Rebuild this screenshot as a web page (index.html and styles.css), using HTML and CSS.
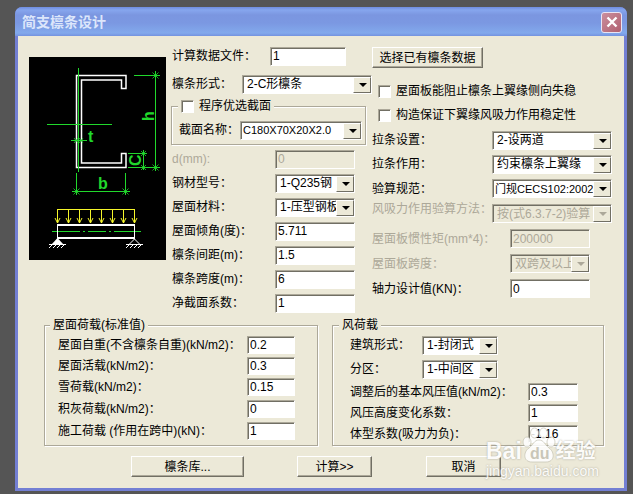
FILE: index.html
```html
<!DOCTYPE html>
<html lang="zh-CN">
<head>
<meta charset="utf-8">
<title>简支檩条设计</title>
<link rel="stylesheet" href="styles.css">
</head>
<body>
<form class="window">
  <header class="titlebar">
    <h1>简支檩条设计</h1>
    <button type="button" class="close" aria-label="关闭">
      <svg viewBox="0 0 12 12" width="12" height="12"><path d="M1.500 1.500L10.500 10.500M10.500 1.500L1.500 10.500" stroke="#fff" stroke-width="2.400"/></svg>
    </button>
  </header>
  <main>
    <div class="top">
      <svg class="diagram" viewBox="0 0 137 203">
        <rect width="137" height="203" fill="#000"/>
        <path d="M47.500 18.500H97V31.500H92.500V23H52.500V106H92.500V96.500H97V110.500H47.500Z" fill="none" stroke="#fff" stroke-width="1.500"/>
        <g stroke="#21d82c" fill="none">
          <path d="M49.500 11V115M18 67.500H83M105 18.500H131M126.500 14V114M99 110.500H131M99 96.500H118M114.500 93V113M42 83.500H58M47.500 116V138M96.500 116V138M43 134.500H101"/>
          <path d="M123.500 15.500L129.500 21.500M129.500 15.500L123.500 21.500M123.500 107.500L129.500 113.500M129.500 107.500L123.500 113.500M112 94L117 99M117 94L112 99M112 108L117 113M117 108L112 113M44.500 131.500L50.500 137.500M50.500 131.500L44.500 137.500M93.500 131.500L99.500 137.500M99.500 131.500L93.500 137.500M45 81L49 86M49 81L45 86M50 81L54 86M54 81L50 86" stroke-width=".8"/>
          <path d="M23 174.500H51M54 174.500H56M59 174.500H77M80 174.500H82M85 174.500H112"/>
        </g>
        <g class="dims">
          <text x="59" y="85">t</text>
          <text x="69" y="132">b</text>
          <text transform="translate(125 64) rotate(-90)">h</text>
          <text transform="translate(112 109) rotate(-90)">C</text>
        </g>
        <g stroke="#f5f52a" fill="none">
          <path d="M28 152.500H106M28.500 152V166M39.500 152V166M50.500 152V166M61.500 152V166M72.500 152V166M83.500 152V166M94.500 152V166M105.500 152V166"/>
          <path d="M26 161L28.500 166L31 161M37 161L39.500 166L42 161M48 161L50.500 166L53 161M59 161L61.500 166L64 161M70 161L72.500 166L75 161M81 161L83.500 166L86 161M92 161L94.500 166L97 161M103 161L105.500 166L108 161"/>
        </g>
        <path d="M28 168H106M28 181H106" stroke="#fff" stroke-width="2"/>
        <path d="M28.500 168V182M105.500 168V182M20 187.500H37M97 187.500H114M24 187L20 191M28 187L24 191M32 187L28 191M36 187L32 191M101 187L97 191M105 187L101 191M109 187L105 191M113 187L109 191M105.500 182L100.500 187M105.500 182L110.500 187" stroke="#fff"/>
        <path d="M28.500 181L22.500 187.500H34.500Z" fill="#fff"/>
      </svg>

      <section class="member">
        <div class="row"><label class="w-file" for="file">计算数据文件：</label><input class="in-file" id="file" value="1"></div>
        <div class="row shape"><label class="w-shape" for="shape">檩条形式：</label><span class="combo c-shape"><select id="shape"><option>2-C形檩条</option></select></span></div>
        <fieldset class="section">
          <legend><label class="check"><input type="checkbox">程序优选截面</label></legend>
          <div class="row"><label for="name">截面名称：</label><span class="combo c-name"><select class="compact" id="name"><option>C180X70X20X2.0</option></select></span></div>
        </fieldset>
        <div class="row"><label class="w-mem off" for="d">d(mm):</label><input id="d" value="0" disabled></div>
        <div class="row"><label class="w-mem" for="steel">钢材型号：</label><span class="combo"><select id="steel"><option>1-Q235钢</option></select></span></div>
        <div class="row"><label class="w-mem" for="roof">屋面材料：</label><span class="combo"><select id="roof"><option>1-压型钢板</option></select></span></div>
        <div class="row"><label class="w-mem" for="angle">屋面倾角(度)：</label><input id="angle" value="5.711"></div>
        <div class="row"><label class="w-mem" for="gap">檩条间距(m)：</label><input id="gap" value="1.5"></div>
        <div class="row"><label class="w-mem" for="span">檩条跨度(m)：</label><input id="span" value="6"></div>
        <div class="row"><label class="w-mem" for="net">净截面系数：</label><input id="net" value="1"></div>
      </section>

      <section class="options">
        <button type="button" class="push pick">选择已有檩条数据</button>
        <label class="check"><input type="checkbox">屋面板能阻止檩条上翼缘侧向失稳</label>
        <label class="check"><input type="checkbox">构造保证下翼缘风吸力作用稳定性</label>
        <div class="row"><label class="w-opt" for="brace">拉条设置：</label><span class="combo c-opt"><select id="brace"><option>2-设两道</option></select></span></div>
        <div class="row"><label class="w-opt" for="act">拉条作用：</label><span class="combo c-opt"><select id="act"><option>约束檩条上翼缘</option></select></span></div>
        <div class="row tall"><label class="w-opt" for="code">验算规范：</label><span class="combo c-opt"><select class="compact" id="code"><option>门规CECS102:2002</option></select></span></div>
        <div class="row tall raised"><label class="w-opt off" for="method">风吸力作用验算方法：</label><span class="combo c-opt"><select id="method" disabled><option>按(式6.3.7-2)验算</option></select></span></div>
        <div class="row tall"><label class="w-plate off" for="inertia">屋面板惯性矩(mm*4)：</label><input id="inertia" value="200000" disabled></div>
        <div class="row tall"><label class="w-plate off" for="pspan">屋面板跨度：</label><span class="combo"><select id="pspan" disabled><option>双跨及以上</option></select></span></div>
        <div class="row tall"><label class="w-plate" for="axial">轴力设计值(KN)：</label><input id="axial" value="0"></div>
      </section>
    </div>

    <div class="loads">
      <fieldset class="roof">
        <legend>屋面荷载(标准值)</legend>
        <div class="row low"><label for="l1">屋面自重(不含檩条自重)(kN/m2)：</label><input id="l1" value="0.2"></div>
        <div class="row low"><label for="l2">屋面活载(kN/m2)：</label><input id="l2" value="0.3"></div>
        <div class="row mid"><label for="l3">雪荷载(kN/m2)：</label><input id="l3" value="0.15"></div>
        <div class="row mid"><label for="l4">积灰荷载(kN/m2)：</label><input id="l4" value="0"></div>
        <div class="row mid"><label for="l5">施工荷载 (作用在跨中)(kN)：</label><input id="l5" value="1"></div>
      </fieldset>
      <fieldset class="wind">
        <legend>风荷载</legend>
        <div class="row"><label class="w-build" for="build">建筑形式：</label><span class="combo c-build"><select id="build"><option>1-封闭式</option></select></span></div>
        <div class="row"><label class="w-build" for="zone">分区：</label><span class="combo c-build"><select id="zone"><option>1-中间区</option></select></span></div>
        <div class="row low"><label class="w-wind" for="w1">调整后的基本风压值(kN/m2)：</label><input id="w1" value="0.3"></div>
        <div class="row low"><label class="w-wind" for="w2">风压高度变化系数：</label><input id="w2" value="1"></div>
        <div class="row low"><label class="w-wind" for="w3">体型系数(吸力为负)：</label><input id="w3" value="-1.16"></div>
      </fieldset>
    </div>

    <div class="actions">
      <button type="button" class="push library">檩条库...</button>
      <button type="button" class="push calc">计算&gt;&gt;</button>
      <button type="button" class="push cancel">取消</button>
    </div>
  </main>
</form>
<div class="watermark">
  <div class="brand">
    <span>Bai</span>
    <svg viewBox="0 0 34 36" width="34" height="36">
      <g fill="#fff" stroke="#c4c1b3" stroke-width=".8">
        <ellipse cx="5" cy="15" rx="4" ry="5"/><ellipse cx="12.500" cy="6" rx="4" ry="5"/><ellipse cx="21.500" cy="6" rx="4" ry="5"/><ellipse cx="29" cy="15" rx="4" ry="5"/>
        <path d="M17 13C12 13 11 18 7 21C1 25 1 35 10 35H24C33 35 33 25 27 21C23 18 22 13 17 13Z"/>
      </g>
      <text x="8" y="32">du</text>
    </svg>
    <span class="cn">经验</span>
  </div>
  <div class="site">jingyan.baidu.com</div>
</div>
</body>
</html>
```
FILE: styles.css
```css
* { box-sizing: border-box; }

body {
  margin: 0;
  padding: 7px 6px 5px 15px;
  background: #555;
  color: #000;
  font: 12px/16px "Liberation Sans", "Noto Sans CJK SC", sans-serif;
}

input, select, button { font: inherit; color: inherit; margin: 0; }

.window {
  padding: 0 3px 3px;
  border-radius: 7px 7px 0 0;
  background: #737fd3;
}

.titlebar {
  display: flex;
  align-items: center;
  justify-content: space-between;
  height: 29px;
  margin: 0 -3px;
  padding: 1px 5px 0 7px;
  border-radius: 7px 7px 0 0;
  background: linear-gradient(#6f8de0 0, #86a6ee 3px, #7b96e0 8px, #7b98e2 16px, #82a9ec 26px, #7492df 29px);
}

h1 {
  margin: 0;
  color: #dce6fb;
  font-size: 14px;
  line-height: 20px;
  font-weight: bold;
}

.close {
  display: grid;
  place-items: center;
  width: 21px;
  height: 21px;
  padding: 0;
  border: 1px solid #e8e4f4;
  border-radius: 3px;
  background: linear-gradient(135deg, #cb8f9e, #b06070);
}

main {
  padding: 8px 10px 11px 11px;
  background: #ece9d8;
}

.top { display: flex; }

.diagram {
  flex: none;
  width: 137px;
  height: 203px;
  margin: 13px 6px 0 0;
}

.dims {
  fill: #21d82c;
  font: bold 16px "Liberation Sans", sans-serif;
}

.member { flex: none; width: 200px; }
.options { flex: 1; }

.row { display: flex; align-items: center; height: 24px; }
.row label { flex: none; white-space: nowrap; }
.tall { height: 25px; }
.low { height: 21px; }
.mid { height: 22px; }
.shape { margin-top: 4px; }

.raised { align-items: flex-start; }
.raised .combo { align-self: center; }

.w-file { width: 98px; }
.w-shape { width: 70px; }
.w-mem { width: 103px; }
.w-opt { width: 120px; }
.w-plate { width: 138px; }
.w-build { width: 72px; }
.w-wind { width: 178px; }

.off { color: #aca899; }

.row > input, .combo {
  width: 80px;
  height: 19px;
  border: 1px solid;
  border-color: #aca899 #fff #fff #aca899;
  background: #fff;
}

.row > input {
  padding: 0 0 0 2px;
  box-shadow: inset 1px 1px #716f64;
  outline: 0;
}

.row > input:disabled { background: #ece9d8; color: #aca899; }

.combo {
  display: block;
  position: relative;
  box-shadow: inset 1px 1px #716f64;
}

.combo select {
  display: block;
  appearance: none;
  width: 100%;
  height: 17px;
  padding: 0 16px 0 4px;
  border: 0;
  background: transparent;
  outline: 0;
}

.combo select.compact { font-size: 11px; padding-left: 2px; }
.combo select:disabled { color: #aca899; opacity: 1; }
.combo:has(:disabled) { background: #ece9d8; }

.combo::after {
  content: "";
  position: absolute;
  inset: 1px 0 0 auto;
  width: 16px;
  border: 1px solid;
  border-color: #fff #716f64 #716f64 #fff;
  background: #ece9d8;
  pointer-events: none;
}

.combo::before {
  content: "";
  position: absolute;
  z-index: 1;
  top: 7px;
  right: 4px;
  border: solid transparent;
  border-width: 4px 4px 0;
  border-top-color: #000;
  pointer-events: none;
}

.combo:has(:disabled)::before { border-top-color: #aca899; }

.row > .in-file { width: 76px; }
.c-shape { width: 130px; }
.c-name { width: 122px; }
.c-opt { width: 120px; }
.c-build { width: 76px; }

fieldset {
  min-width: 0;
  margin: 0;
  padding: 0;
  border: 1px solid #aca899;
  box-shadow: 1px 1px #fff, inset 1px 1px #fff;
}

legend {
  height: 16px;
  padding: 0 3px;
  background: #ece9d8;
}

.section {
  width: 195px;
  height: 47px;
  margin: 2px 0 2px -1px;
  padding: 4px 3px 0 7px;
}

.section legend { margin-left: -1px; }
.section .row { justify-content: space-between; }

.check { display: flex; align-items: center; gap: 5px; }

.check input {
  appearance: none;
  width: 13px;
  height: 13px;
  border: 1px solid;
  border-color: #aca899 #fff #fff #aca899;
  background: #fff;
  box-shadow: inset 1px 1px #716f64;
}

.options .check { height: 24px; margin-left: 6px; }
.options .check + .row { margin-top: 1px; }

.push {
  height: 21px;
  padding: 0;
  border: 1px solid;
  border-color: #fff #716f64 #716f64 #fff;
  background: #ece9d8;
  box-shadow: inset -1px -1px #aca899;
}

.pick { display: block; width: 111px; margin: 3px 0 11px; }

.loads {
  display: flex;
  gap: 14px;
  margin: 2px 0 0 15px;
}

.roof, .wind { height: 129px; }
.roof { width: 274px; padding: 1px 22px 0 13px; }
.roof .row { justify-content: space-between; }
.roof .row > input { width: 48px; height: 18px; }
.wind { width: 272px; padding: 0 17px; }
.wind .low > input { width: 50px; height: 18px; }
.wind legend { margin-left: -11px; }
.roof legend { margin-left: -8px; }

.actions { display: flex; margin: 10px 0 0 102px; }
.library { width: 113px; margin-right: 53px; }
.calc { width: 75px; margin-right: 54px; }
.cancel { width: 75px; }

.watermark {
  position: absolute;
  left: 486px;
  top: 427px;
  color: #fff;
  opacity: .85;
  text-shadow: 0 0 2px #98958a;
  pointer-events: none;
}

.brand {
  display: flex;
  align-items: flex-end;
  height: 36px;
  font-size: 23px;
  line-height: 24px;
  font-weight: bold;
}

.brand .cn { font-size: 20px; }
.brand text { fill: #c4c1b3; font: bold 16px "Liberation Sans", sans-serif; text-shadow: none; }
.site { font-size: 14px; }
```
